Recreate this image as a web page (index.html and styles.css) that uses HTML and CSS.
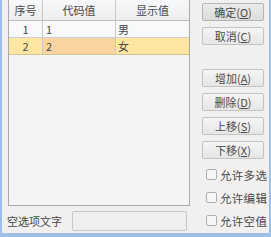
FILE: index.html
```html
<!DOCTYPE html>
<html>
<head>
<meta charset="utf-8">
<link rel="stylesheet" href="styles.css">
</head>
<body>
<div class="dialog">
  <div class="left">
    <div class="grid">
      <table>
        <thead>
          <tr><th class="c1">序号</th><th class="c2">代码值</th><th class="c3">显示值</th></tr>
        </thead>
        <tbody>
          <tr><td class="c1 num">1</td><td class="c2">1</td><td class="c3">男</td></tr>
          <tr class="sel"><td class="c1 num">2</td><td class="c2 cur">2</td><td class="c3">女</td></tr>
        </tbody>
      </table>
    </div>
    <div class="empty-row">
      <span class="empty-label">空选项文字</span>
      <div class="empty-input"></div>
    </div>
  </div>
  <div class="right">
    <div class="btn default">确定(<u>O</u>)</div>
    <div class="btn gap-s">取消(<u>C</u>)</div>
    <div class="btn gap-l">增加(<u>A</u>)</div>
    <div class="btn gap-s">删除(<u>D</u>)</div>
    <div class="btn gap-s">上移(<u>S</u>)</div>
    <div class="btn gap-s">下移(<u>X</u>)</div>
    <label class="chk first"><span class="box"></span><span class="txt">允许多选</span></label>
    <label class="chk"><span class="box"></span><span class="txt">允许编辑</span></label>
    <label class="chk"><span class="box"></span><span class="txt">允许空值</span></label>
  </div>
</div>
</body>
</html>
```

FILE: styles.css
```css
html, body {
  margin: 0;
  padding: 0;
}
body {
  width: 271px;
  height: 237px;
  overflow: hidden;
  background: #9fc0e6;
  font-family: "Noto Sans CJK SC", "Noto Sans", sans-serif;
  font-size: 11px;
  color: #484848;
}
.dialog {
  margin: 0 2px;
  height: 233px;
  background: #f1f0ef;
  display: flex;
  padding-left: 6px;
  box-sizing: border-box;
}
.left {
  width: 182px;
  display: flex;
  flex-direction: column;
}
.grid {
  height: 206px;
  border: 1px solid #a9a9a9;
  border-top: none;
  background: #f3f4f5;
  box-sizing: border-box;
}
table {
  border-collapse: collapse;
  width: 100%;
  table-layout: fixed;
}
th, td {
  height: 16px;
  padding: 0;
  line-height: 16px;
  border-right: 1px solid #c9c9c9;
  border-bottom: 1px solid #cfcfcf;
  white-space: nowrap;
  overflow: hidden;
}
th {
  font-weight: normal;
  background: linear-gradient(#f7f8f9, #eceef0);
  border-bottom: 1px solid #bdbdbd;
  line-height: 20px;
  height: 16px;
  vertical-align: bottom;
}
th.c3, td.c3 {
  border-right: none;
}
.c1 { width: 33px; text-align: center; }
.c2 { width: 72px; text-align: left; padding-left: 3px; }
th.c2 { text-align: center; padding-left: 0; }
.c3 { text-align: left; padding-left: 2px; }
th.c3 { text-align: center; padding-left: 0; }
tbody tr { background: #f8f9fa; }
tr.sel td {
  background: #fde6a2;
  border-bottom: 1px solid #d6c48e;
}
tr.sel td.cur {
  background: #f9d4a2;
}
.empty-row {
  display: flex;
  align-items: center;
  margin-top: 5px;
}
.empty-label {
  width: 65px;
  margin-left: -1px;
}
.empty-input {
  width: 115px;
  height: 20px;
  border: 1px solid #c6c6c6;
  border-radius: 2px;
  background: #efefef;
  box-sizing: border-box;
}
.right {
  margin-left: 12px;
  width: 62px;
  display: flex;
  flex-direction: column;
}
.btn {
  height: 18px;
  box-sizing: border-box;
  border: 1px solid #c3c3c3;
  border-radius: 2px;
  background: linear-gradient(#f5f5f5, #e6e6e6);
  text-align: center;
  line-height: 16px;
  font-size: 11px;
  color: #4a4a4a;
  margin-top: 6px;
}
.btn.default {
  margin-top: 3px;
  border-color: #b5b5b5;
  background: linear-gradient(#ebebeb, #dcdcdc);
}
.btn.gap-l { margin-top: 24px; }
.btn u { text-decoration: underline; }
.chk {
  display: flex;
  align-items: center;
  height: 11px;
  margin-top: 12px;
  margin-left: 4px;
}
.chk.first { margin-top: 10px; }
.box {
  width: 11px;
  height: 11px;
  box-sizing: border-box;
  border: 1px solid #b0b0b0;
  border-radius: 2px;
  background: #f6f6f6;
  flex: none;
}
.txt {
  margin-left: 3px;
  font-size: 11.5px;
  letter-spacing: 0.3px;
  white-space: nowrap;
}
```
